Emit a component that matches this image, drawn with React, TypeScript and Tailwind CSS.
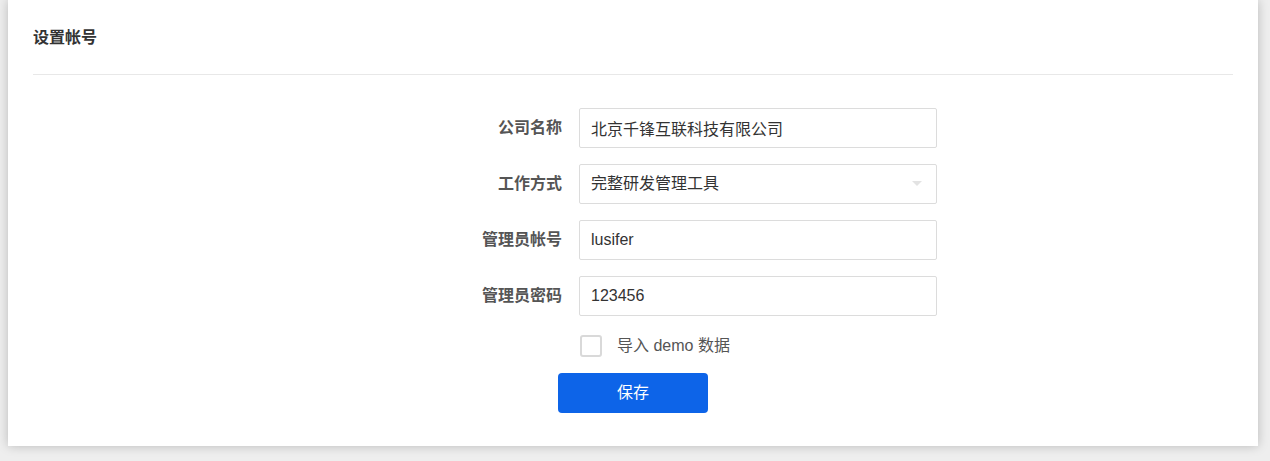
import { useState } from 'react';

const font = { fontFamily: '"Liberation Sans", "Noto Sans CJK SC", sans-serif' };

function Field({ label, children }: { label: string; children: React.ReactNode }) {
  return (
    <div className="flex items-center">
      <label className="w-[104px] pr-[17px] text-right text-[16px] font-semibold text-[#555]">{label}</label>
      {children}
    </div>
  );
}

export default function App() {
  const [company, setCompany] = useState('北京千锋互联科技有限公司');
  const [account, setAccount] = useState('lusifer');
  const [password, setPassword] = useState('123456');
  const [demo, setDemo] = useState(false);

  const inputCls =
    'h-10 w-[358px] rounded-[2px] border border-[#dcdcdc] bg-white px-[11px] text-[16px] text-[#333] outline-none';

  return (
    <div className="min-h-[461px] bg-[#eeeeee] pl-2 pr-3 pb-[15px]" style={font}>
      <div className="h-[446px] bg-white px-[25px] shadow-[0_0_10px_rgba(0,0,0,0.22)]">
        <h2 className="pt-[28px] pb-[26px] text-[16px] font-semibold leading-5 text-[#333]">设置帐号</h2>
        <div className="h-px bg-[#e8e8e8]" />
        <div className="ml-[442px] pt-[33px]">
          <div className="flex flex-col gap-4">
            <Field label="公司名称">
              <input className={inputCls} value={company} onChange={(e) => setCompany(e.target.value)} />
            </Field>
            <Field label="工作方式">
              <div className={`${inputCls} flex items-center justify-between`}>
                <span>完整研发管理工具</span>
                <svg width="10" height="6" viewBox="0 0 10 6" className="mr-[3px]">
                  <path d="M0 0h10L5 5z" fill="#e3e3e3" />
                </svg>
              </div>
            </Field>
            <Field label="管理员帐号">
              <input className={inputCls} value={account} onChange={(e) => setAccount(e.target.value)} />
            </Field>
            <Field label="管理员密码">
              <input className={inputCls} value={password} onChange={(e) => setPassword(e.target.value)} />
            </Field>
          </div>
          <label className="mt-[18px] ml-[105px] flex w-fit cursor-pointer items-center">
            <span
              onClick={() => setDemo(!demo)}
              className={`h-[22px] w-[22px] rounded-[3px] border-2 ${demo ? 'border-[#0d64e8] bg-[#0d64e8]' : 'border-[#d9d9d9] bg-white'}`}
            />
            <span className="ml-[15px] text-[16px] text-[#555]">导入 demo 数据</span>
          </label>
          <button className="mt-[15px] ml-[83px] h-10 w-[150px] rounded-[4px] bg-[#0d64e8] text-[16px] text-white">
            保存
          </button>
        </div>
      </div>
    </div>
  );
}
